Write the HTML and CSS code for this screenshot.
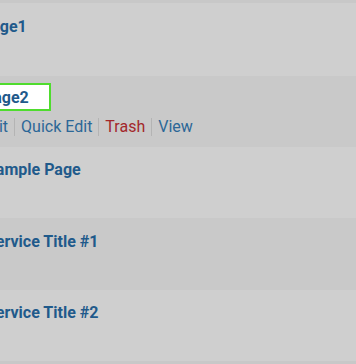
FILE: index.html
```html
<!DOCTYPE html>
<html lang="en">
<head>
    <meta charset="UTF-8">
    <meta name="viewport" content="width=device-width, initial-scale=1.0">
    <title>Pages</title>
    <link rel="stylesheet" href="styles.css">
</head>
<body>
    <div class="band"></div>
    <div class="list">
        <div class="row row-light r1">
            <a class="title" href="#">Page1</a>
        </div>
        <div class="row row-dark r2">
            <span class="highlight"><a class="title" href="#">Page2</a></span>
            <div class="actions">
                <a href="#">Edit</a><span class="sep"></span><a href="#">Quick Edit</a><span class="sep"></span><a class="trash" href="#">Trash</a><span class="sep"></span><a href="#">View</a>
            </div>
        </div>
        <div class="row row-light r3">
            <a class="title shift" href="#">Sample Page</a>
        </div>
        <div class="row row-dark r4">
            <a class="title shift" href="#">Service Title #1</a>
        </div>
        <div class="row row-light r5">
            <a class="title shift" href="#">Service Title #2</a>
        </div>
    </div>
    <div class="band"></div>
</body>
</html>
```

FILE: styles.css
```css
body {
    margin: 0;
    background-color: #cdcdcd;
    font-family: Roboto, "Liberation Sans", Arial, sans-serif;
    overflow: hidden;
}
a {
    text-decoration: none;
}
.band {
    height: 3px;
    background-color: #c8c8c8;
}
.row {
    box-sizing: border-box;
    margin-left: -19px;
}
.row-light {
    background-color: #cfcfcf;
}
.row-dark {
    background-color: #c9c9c9;
}
.r1 { height: 73px; padding-top: 14px; }
.r2 { height: 71px; padding-top: 7px; }
.r3 { height: 71px; padding-top: 13px; }
.r4 { height: 72px; padding-top: 14px; }
.r5 { height: 71px; padding-top: 13px; }
.title {
    display: inline-block;
    font-size: 16px;
    font-weight: 700;
    line-height: 19px;
    color: #1f5a8b;
}
.shift {
    margin-left: 5px;
}
.highlight {
    display: inline-block;
    box-sizing: border-box;
    height: 28px;
    padding: 3px 20px 0 16px;
    margin-left: -16px;
    background-color: #ffffff;
    border: 2px solid #4fdc2e;
}
.actions {
    display: flex;
    align-items: center;
    margin-top: 6px;
    margin-left: 0;
    font-size: 16px;
    line-height: 20px;
}
.actions a {
    color: #2c6797;
}
.actions .trash {
    color: #a3272b;
}
.sep {
    width: 1px;
    height: 18px;
    margin: 0 6px;
    background-color: #b4b4b4;
}
```
